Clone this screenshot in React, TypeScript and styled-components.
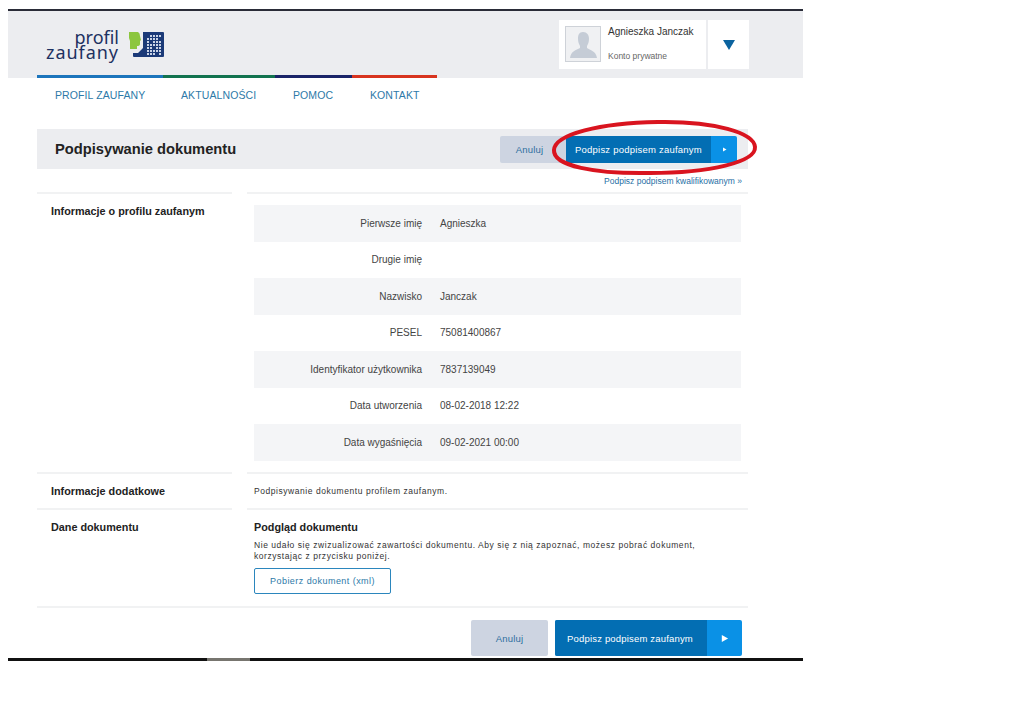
import React from 'react';
import styled, { createGlobalStyle } from 'styled-components';

const GlobalStyle = createGlobalStyle`
  html, body {
    margin: 0;
    padding: 0;
    background: #fff;
    font-family: "Liberation Sans", Arial, sans-serif;
    color: #333;
  }
`;

const Page = styled.div`
  width: 795px;
  margin-left: 8px;
  padding-top: 9px;
`;

const Header = styled.header`
  height: 69px;
  box-sizing: border-box;
  border-top: 2px solid #2a2c38;
  background: #ecedf0;
  display: flex;
  justify-content: space-between;
  padding: 9px 54px 0 38px;
`;

const Logo = styled.div`
  display: flex;
  gap: 10px;
  align-items: flex-start;
  padding-top: 11px;
`;

const LogoText = styled.div`
  width: 73px;
  margin-top: -1px;
  color: #1d3161;
  font-family: "Noto Sans", "Open Sans", sans-serif;
  font-size: 18px;
  line-height: 15px;
  text-align: right;
`;

const LogoLine = styled.div<{ $spacing: number }>`
  letter-spacing: ${(p) => p.$spacing}px;
  white-space: nowrap;
`;

const UserBox = styled.div`
  display: flex;
  gap: 2px;
  height: 49px;
`;

const UserInfo = styled.div`
  width: 147px;
  background: #fff;
  display: flex;
  padding: 6px;
  gap: 7px;
  box-sizing: border-box;
`;

const Avatar = styled.div`
  width: 36px;
  height: 36px;
  box-sizing: border-box;
  border: 1px solid #ced2d8;
  background: #f0f1f3;
`;

const UserName = styled.div`
  font-size: 10px;
  line-height: 12px;
  color: #333;
`;

const UserKind = styled.div`
  font-size: 8.5px;
  line-height: 10px;
  color: #666;
  margin-top: 13px;
`;

const UserToggle = styled.div`
  width: 41px;
  background: #fff;
  display: flex;
  align-items: center;
  justify-content: center;
`;

const Nav = styled.nav`
  display: flex;
  margin: -3px 0 0 29px;
  height: 54px;
`;

const NavItem = styled.a<{ $width: number; $color: string }>`
  width: ${(p) => p.$width}px;
  box-sizing: border-box;
  height: 24px;
  border-top: 3px solid ${(p) => p.$color};
  padding: 11px 0 0 18px;
  font-size: 10.5px;
  line-height: 13px;
  letter-spacing: 0.1px;
  color: #2d79a8;
  white-space: nowrap;
`;

const Content = styled.main`
  margin-left: 29px;
  width: 711px;
`;

const TitleBar = styled.div`
  position: relative;
  height: 40px;
  background: #ecedf0;
  display: flex;
  align-items: center;
  justify-content: space-between;
  padding: 0 11px 0 18px;
`;

const Title = styled.h1`
  margin: 0;
  font-size: 14.7px;
  font-weight: 700;
  color: #222;
`;

const Actions = styled.div<{ $gap: number }>`
  display: flex;
  gap: ${(p) => p.$gap}px;
`;

const CancelButton = styled.button<{ $big?: boolean }>`
  width: ${(p) => (p.$big ? 77 : 66)}px;
  height: ${(p) => (p.$big ? 36 : 27)}px;
  border: 0;
  border-radius: 2px;
  background: #cdd4e1;
  color: #2d6f9f;
  font: 9.5px "Liberation Sans", Arial, sans-serif;
  letter-spacing: 0.2px;
  padding: 0 ${(p) => (p.$big ? 0 : 7)}px 0 0;
`;

const PrimaryButton = styled.button<{ $big?: boolean }>`
  display: flex;
  width: ${(p) => (p.$big ? 187 : 171)}px;
  height: ${(p) => (p.$big ? 36 : 27)}px;
  border: 0;
  border-radius: 2px;
  padding: 0;
  overflow: hidden;
  background: #0a91e6;
  color: #fff;
  font: 9.5px "Liberation Sans", Arial, sans-serif;
  letter-spacing: ${(p) => (p.$big ? 0.18 : 0.22)}px;
`;

const PrimaryLabel = styled.span<{ $big?: boolean }>`
  width: ${(p) => (p.$big ? 152 : 145)}px;
  height: 100%;
  background: #036eb3;
  display: flex;
  align-items: center;
  padding-left: ${(p) => (p.$big ? 12 : 9)}px;
  box-sizing: border-box;
  white-space: nowrap;
`;

const PrimaryArrow = styled.span`
  flex: 1;
  display: flex;
  align-items: center;
  justify-content: center;
`;

const Highlight = styled.svg`
  position: absolute;
  left: 513px;
  top: -9px;
  overflow: visible;
`;

const QualifiedLink = styled.a`
  display: block;
  height: 23px;
  padding: 7px 6px 0 0;
  box-sizing: border-box;
  text-align: right;
  font-size: 8.5px;
  line-height: 10px;
  color: #1f6fa5;
`;

const Section = styled.section<{ $height: number }>`
  display: flex;
  gap: 15px;
  height: ${(p) => p.$height}px;
`;

const SectionLabel = styled.div`
  width: 195px;
  box-sizing: border-box;
  border-top: 2px solid #f1f2f3;
  padding: 11px 0 0 14px;
  font-size: 10.8px;
  line-height: 13px;
  font-weight: 700;
  color: #222;
`;

const SectionBody = styled.div<{ $top: number }>`
  flex: 1;
  box-sizing: border-box;
  border-top: 2px solid #f1f2f3;
  padding: ${(p) => p.$top}px 7px 0;
`;

const Row = styled.div<{ $shaded: boolean }>`
  display: flex;
  height: 36.5px;
  align-items: center;
  font-size: 10px;
  color: #444;
  background: ${(p) => (p.$shaded ? '#f4f5f7' : 'transparent')};
`;

const RowLabel = styled.div`
  width: 168px;
  text-align: right;
  margin-right: 18px;
`;

const Small = styled.p`
  margin: 0;
  font-size: 8.5px;
  line-height: 11px;
  letter-spacing: 0.55px;
  color: #333;
`;

const Subtitle = styled.h2`
  margin: 0 0 6px;
  font-size: 10.8px;
  line-height: 13px;
  font-weight: 700;
  color: #222;
`;

const OutlineButton = styled.button`
  display: block;
  margin-top: 6px;
  width: 137px;
  height: 26px;
  border: 1px solid #2b86bd;
  border-radius: 2px;
  background: #fff;
  color: #2d79a8;
  font: 9px "Liberation Sans", Arial, sans-serif;
  letter-spacing: 0.45px;
  padding: 0;
`;

const BottomBar = styled.div`
  border-top: 2px solid #f1f2f3;
  display: flex;
  justify-content: flex-end;
  padding: 12px 6px 0 0;
`;

const FootLine = styled.div`
  height: 3px;
  margin-top: 2px;
  background: linear-gradient(to right, #111 199px, #77756f 199px, #77756f 242px, #111 242px);
`;

const navItems = [
  { label: 'PROFIL ZAUFANY', width: 126, color: '#1c75bc' },
  { label: 'AKTUALNOŚCI', width: 112, color: '#12734f' },
  { label: 'POMOC', width: 77, color: '#1a2468' },
  { label: 'KONTAKT', width: 85, color: '#d8341f' },
];

const profileRows = [
  ['Pierwsze imię', 'Agnieszka'],
  ['Drugie imię', ''],
  ['Nazwisko', 'Janczak'],
  ['PESEL', '75081400867'],
  ['Identyfikator użytkownika', '7837139049'],
  ['Data utworzenia', '08-02-2018 12:22'],
  ['Data wygaśnięcia', '09-02-2021 00:00'],
];

const Arrow: React.FC<{ size: number }> = ({ size }) => (
  <svg width={size} height={size} viewBox="0 0 10 10">
    <path d="M2 1 L9 5 L2 9 Z" fill="#fff" />
  </svg>
);

const LogoIcon = () => {
  const dots = [];
  for (let y = 0; y < 7; y++) {
    for (let x = 0; x < 5; x++) {
      if ((x * 3 + y * 2) % 7 !== 0) {
        dots.push(<rect key={`${x}-${y}`} x={18 + x * 3} y={4 + y * 3} width="2" height="2" fill="#c9d3e6" />);
      }
    }
  }
  return (
    <svg width="36" height="28" viewBox="0 0 36 28">
      <path d="M14 1 H34 Q35 1 35 2 V25 Q35 26 34 26 H5 Q4 26 4 25 V22 H9 L14 17 Z" fill="#1b3a78" />
      <path d="M0 1 H9 Q11 2 11 5 L12 9 L11 10 V13 Q11 15 8 15 V18 H1 V10 L0 7 Z" fill="#8cc63f" />
      {dots}
    </svg>
  );
};

const AvatarIcon = () => (
  <svg width="34" height="34" viewBox="0 0 34 34">
    <path
      d="M17 5 C13 5 12 8 12 12 C12 15 13 17 14 19 L14 21 C10 23 5 24 4 31 H31 C30 24 24 23 21 21 L21 19 C22 17 23 15 23 12 C23 8 21 5 17 5 Z"
      fill="#c5ccd6"
    />
  </svg>
);

const App: React.FC = () => (
  <Page>
    <GlobalStyle />
    <Header>
      <Logo>
        <LogoText>
          <LogoLine $spacing={0}>profil</LogoLine>
          <LogoLine $spacing={0.95}>zaufany</LogoLine>
        </LogoText>
        <LogoIcon />
      </Logo>
      <UserBox>
        <UserInfo>
          <Avatar>
            <AvatarIcon />
          </Avatar>
          <div>
            <UserName>Agnieszka Janczak</UserName>
            <UserKind>Konto prywatne</UserKind>
          </div>
        </UserInfo>
        <UserToggle>
          <svg width="12" height="10" viewBox="0 0 12 10">
            <path d="M0 0 H12 L6 10 Z" fill="#0b639f" />
          </svg>
        </UserToggle>
      </UserBox>
    </Header>
    <Nav>
      {navItems.map((item) => (
        <NavItem key={item.label} $width={item.width} $color={item.color}>
          {item.label}
        </NavItem>
      ))}
    </Nav>
    <Content>
      <TitleBar>
        <Title>Podpisywanie dokumentu</Title>
        <Actions $gap={0}>
          <CancelButton>Anuluj</CancelButton>
          <PrimaryButton>
            <PrimaryLabel>Podpisz podpisem zaufanym</PrimaryLabel>
            <PrimaryArrow>
              <Arrow size={5} />
            </PrimaryArrow>
          </PrimaryButton>
        </Actions>
        <Highlight width="208" height="56" viewBox="0 0 208 56">
          <path
            d="M4 30 C5 14 50 3 108 2 C165 1 204 13 205 27 C206 42 160 53 100 53 C45 54 3 46 4 30 Z"
            fill="none"
            stroke="#d9141f"
            strokeWidth="4"
          />
        </Highlight>
      </TitleBar>
      <QualifiedLink>Podpisz podpisem kwalifikowanym »</QualifiedLink>
      <Section $height={280}>
        <SectionLabel>Informacje o profilu zaufanym</SectionLabel>
        <SectionBody $top={11}>
          {profileRows.map(([label, value], i) => (
            <Row key={label} $shaded={i % 2 === 0}>
              <RowLabel>{label}</RowLabel>
              {value}
            </Row>
          ))}
        </SectionBody>
      </Section>
      <Section $height={36}>
        <SectionLabel>Informacje dodatkowe</SectionLabel>
        <SectionBody $top={12}>
          <Small>Podpisywanie dokumentu profilem zaufanym.</Small>
        </SectionBody>
      </Section>
      <Section $height={98}>
        <SectionLabel>Dane dokumentu</SectionLabel>
        <SectionBody $top={11}>
          <Subtitle>Podgląd dokumentu</Subtitle>
          <Small>
            Nie udało się zwizualizować zawartości dokumentu. Aby się z nią zapoznać, możesz pobrać dokument,
            <br />
            korzystając z przycisku poniżej.
          </Small>
          <OutlineButton>Pobierz dokument (xml)</OutlineButton>
        </SectionBody>
      </Section>
      <BottomBar>
        <Actions $gap={7}>
          <CancelButton $big>Anuluj</CancelButton>
          <PrimaryButton $big>
            <PrimaryLabel $big>Podpisz podpisem zaufanym</PrimaryLabel>
            <PrimaryArrow>
              <Arrow size={9} />
            </PrimaryArrow>
          </PrimaryButton>
        </Actions>
      </BottomBar>
    </Content>
    <FootLine />
  </Page>
);

export default App;
